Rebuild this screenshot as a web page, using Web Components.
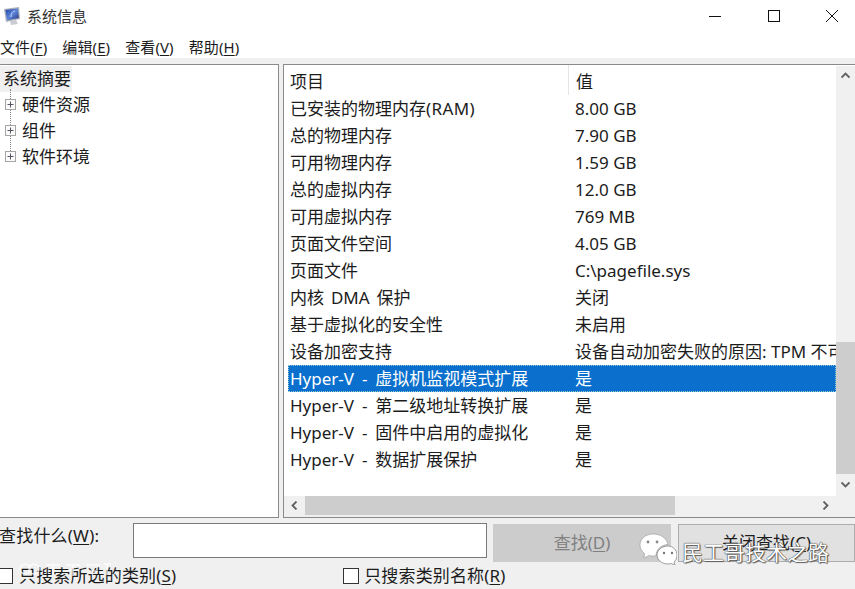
<!DOCTYPE html>
<html lang="zh">
<head>
<meta charset="utf-8">
<title>系统信息</title>
<style>
  html, body { margin: 0; height: 100%; overflow: hidden; }
  body { font: 17px/1 "Noto Sans", "Noto Sans CJK SC", sans-serif; color: #1c1c1c; background: #f0f0f0; }
</style>
</head>
<body>
<sys-window>
  <title-bar slot="top">系统信息</title-bar>
  <menu-bar slot="top"></menu-bar>
  <nav-tree slot="left"></nav-tree>
  <info-table slot="right"></info-table>
  <find-bar slot="bottom"></find-bar>
  <water-mark slot="over"></water-mark>
</sys-window>

<script>
class SysWindow extends HTMLElement {
  constructor() {
    super();
    this.attachShadow({ mode: 'open' });
    this.shadowRoot.innerHTML = `
      <style>
        :host { display: flex; flex-direction: column; width: 855px; height: 589px; position: relative; overflow: hidden; }
        .panes { display: flex; gap: 4px; height: 454px; margin-top: 6px; }
        ::slotted([slot=left]) { width: 279px; flex: none; }
        ::slotted([slot=right]) { flex: 1; min-width: 0; }
      </style>
      <slot name="top"></slot>
      <div class="panes"><slot name="left"></slot><slot name="right"></slot></div>
      <slot name="bottom"></slot>
      <slot name="over"></slot>
    `;
  }
}

class TitleBar extends HTMLElement {
  constructor() {
    super();
    this.attachShadow({ mode: 'open' });
    this.shadowRoot.innerHTML = `
      <style>
        :host { display: flex; align-items: center; height: 32px; background: #fff; padding-left: 3px; box-sizing: border-box; }
        .icon { width: 18px; height: 20px; margin-right: 6px; flex: none; }
        .text { font-size: 15px; color: #333; flex: 1; }
        .btns { display: flex; gap: 12.5px; }
        .btns svg { width: 12px; height: 12px; display: block; }
        .btn { width: 46px; display: flex; justify-content: center; }
      </style>
      <svg class="icon" viewBox="0 0 18 20">
        <defs><linearGradient id="s" x1="0" y1="0" x2="1" y2="1"><stop offset="0" stop-color="#1d3fa6"/><stop offset=".5" stop-color="#5f86d8"/><stop offset="1" stop-color="#24307a"/></linearGradient></defs>
        <path d="M1 3 L16 1 L17 13 L3 16Z" fill="#a9aebb"/>
        <path d="M2.5 4 L15 2.5 L15.8 12 L4 14.3Z" fill="url(#s)"/>
        <path d="M7 15 L13 14 L15 18 L8 19Z" fill="#c9ccd3"/>
        <path d="M8 11 C8 7 10 5 12 5" stroke="#cfe0ff" fill="none"/>
      </svg>
      <span class="text"><slot></slot></span>
      <div class="btns">
        <div class="btn"><svg viewBox="0 0 12 12"><path d="M0 6.5H12" stroke="#111" stroke-width="1"/></svg></div>
        <div class="btn"><svg viewBox="0 0 12 12"><rect x=".5" y=".5" width="11" height="11" fill="none" stroke="#111"/></svg></div>
        <div class="btn"><svg viewBox="0 0 12 12"><path d="M0 0L12 12M12 0L0 12" stroke="#111" stroke-width="1"/></svg></div>
      </div>
    `;
  }
}

class MenuBar extends HTMLElement {
  constructor() {
    super();
    this.attachShadow({ mode: 'open' });
    const items = [['文件', 'F'], ['编辑', 'E'], ['查看', 'V'], ['帮助', 'H']];
    this.shadowRoot.innerHTML = `
      <style>
        :host { display: flex; gap: 15px; height: 26px; align-items: center; background: #fff; font-size: 15px; box-sizing: border-box; padding-top: 4px; }
        span { letter-spacing: .1px; }
        u { text-underline-offset: 2px; }
      </style>
      ${items.map(([t, k]) => `<span>${t}(<u>${k}</u>)</span>`).join('')}
    `;
  }
}

class NavTree extends HTMLElement {
  constructor() {
    super();
    this.attachShadow({ mode: 'open' });
    const plus = `<svg class="plus" viewBox="0 0 11 11"><rect x=".5" y=".5" width="10" height="10" fill="#fbfbfb" stroke="#a5a5a5"/><path d="M2.5 5.5H8.5M5.5 2.5V8.5" stroke="#556"/></svg>`;
    this.shadowRoot.innerHTML = `
      <style>
        :host { display: block; background: #fff; border: 1px solid #8a8a8a; border-left: 0; box-sizing: border-box; padding-top: 1px; position: relative; }
        .root { display: inline-block; background: #f0f0f0; padding: 3px 1px 3px 3px; height: 20px; line-height: 20px; }
        .row { display: flex; align-items: center; height: 26px; }
        .plus { width: 11px; height: 11px; margin: 0 6px 0 5px; flex: none; position: relative; z-index: 1; }
        .tree { position: relative; margin-top: -1px; }
        .line { position: absolute; left: 10px; top: -2px; height: 72px; border-left: 1px dotted #888; }
        .row span { position: relative; }
      </style>
      <div class="root">系统摘要</div>
      <div class="tree">
        <div class="line"></div>
        <div class="row">${plus}<span>硬件资源</span></div>
        <div class="row">${plus}<span>组件</span></div>
        <div class="row">${plus}<span>软件环境</span></div>
      </div>
    `;
  }
}

class InfoTable extends HTMLElement {
  constructor() {
    super();
    this.attachShadow({ mode: 'open' });
    const rows = [
      ['已安装的物理内存<i>(RAM)</i>', '8.00 GB'],
      ['总的物理内存', '7.90 GB'],
      ['可用物理内存', '1.59 GB'],
      ['总的虚拟内存', '12.0 GB'],
      ['可用虚拟内存', '769 MB'],
      ['页面文件空间', '4.05 GB'],
      ['页面文件', 'C:\\pagefile.sys'],
      ['内核 DMA 保护', '关闭'],
      ['基于虚拟化的安全性', '未启用'],
      ['设备加密支持', '设备自动加密失败的原因: TPM 不可用'],
      ['Hyper-V - 虚拟机监视模式扩展', '是', 1],
      ['Hyper-V - 第二级地址转换扩展', '是'],
      ['Hyper-V - 固件中启用的虚拟化', '是'],
      ['Hyper-V - 数据扩展保护', '是'],
    ];
    this.shadowRoot.innerHTML = `
      <style>
        :host { display: grid; grid-template: 1fr 21px / 1fr 19px; background: #fff; border: 1px solid #8a8a8a; border-right: 0; box-sizing: border-box; min-height: 0; }
        .list { overflow: hidden; min-width: 0; }
        .head, .row { display: grid; grid-template-columns: 284px 1fr; }
        .head { height: 30px; }
        .head span { padding-left: 6px; height: 30px; line-height: 33px; }
        .head span + span { border-left: 1px solid #e5e5e5; padding-left: 7px; }
        .row { height: 27px; line-height: 27px; white-space: nowrap; }
        .row span { padding-left: 6px; overflow: hidden; word-spacing: 2.5px; }
        .row span.hv { word-spacing: 3.5px; }
        .row span + span { padding-left: 7px; word-spacing: 0; }
        i { font-style: normal; letter-spacing: .4px; }
        .sel { background: #0a6fcd; color: #fff; outline: 1px dotted #9cc; outline-offset: -1px; margin-left: 4px; grid-template-columns: 280px 1fr; }
        .sel span:first-child { padding-left: 2px; }
        .v, .h { background: #f0f0f0; display: flex; }
        .v { flex-direction: column; grid-row: 1; grid-column: 2; margin-top: 1px; }
        .h { grid-row: 2; grid-column: 1; }
        .corner { background: #f0f0f0; }
        .v .thumb { margin-top: 257px; height: 132px; background: #cdcdcd; }
        .v .arrow { height: 19px; flex: none; display: flex; align-items: center; justify-content: center; }
        .v .arrow.down { margin-top: auto; margin-bottom: 2px; }
        .h .arrow { width: 21px; flex: none; display: flex; align-items: center; justify-content: center; margin-bottom: 2px; }
        .h .thumb { width: 370px; background: #cdcdcd; margin-bottom: 2px; }
        .h .arrow.right { margin-left: auto; }
        svg { width: 9px; height: 9px; display: block; }
        path { fill: none; stroke: #606060; stroke-width: 1.8; }
      </style>
      <div class="list">
        <div class="head"><span>项目</span><span>值</span></div>
        ${rows.map(([a, b, s]) => `<div class="row${s ? ' sel' : ''}"><span${a.startsWith('Hyper') ? ' class="hv"' : ''}>${a}</span><span>${b}</span></div>`).join('')}
      </div>
      <div class="v">
        <div class="arrow"><svg viewBox="0 0 9 9"><path d="M.5 6.5L4.5 2.5L8.5 6.5"/></svg></div>
        <div class="thumb"></div>
        <div class="arrow down"><svg viewBox="0 0 9 9"><path d="M.5 2.5L4.5 6.5L8.5 2.5"/></svg></div>
      </div>
      <div class="h">
        <div class="arrow"><svg viewBox="0 0 9 9"><path d="M6.5 .5L2.5 4.5L6.5 8.5"/></svg></div>
        <div class="thumb"></div>
        <div class="arrow right"><svg viewBox="0 0 9 9"><path d="M2.5 .5L6.5 4.5L2.5 8.5"/></svg></div>
      </div>
      <div class="corner"></div>
    `;
  }
}

class FindBar extends HTMLElement {
  constructor() {
    super();
    this.attachShadow({ mode: 'open' });
    this.shadowRoot.innerHTML = `
      <style>
        :host { display: block; font-size: 17px; }
        .find { display: flex; align-items: flex-start; height: 45px; padding-top: 5px; box-sizing: border-box; }
        label { width: 133px; flex: none; height: 26px; line-height: 26px; margin-left: -1px; margin-right: 1px; letter-spacing: .2px; }
        .input { width: 354px; height: 35px; background: #fff; border: 1px solid #7a7a7a; box-sizing: border-box; flex: none; }
        .btn { height: 38px; margin-top: 1px; padding-bottom: 2px; width: 178px; box-sizing: border-box; display: flex; align-items: center; justify-content: center; margin-left: 6px; flex: none; }
        .off { background: #cccccc; color: #808080; }
        .on { background: #e1e1e1; border: 1px solid #adadad; width: 177px; margin-left: 7px; }
        .checks { display: flex; align-items: center; height: 26px; }
        .c { display: flex; align-items: center; gap: 6px; letter-spacing: .15px; }
        .c span { margin-top: -2px; }
        .c + .c { margin-left: 167px; gap: 5px; }
        .box { width: 16px; height: 16px; background: #fff; border: 1px solid #333; box-sizing: border-box; }
        u { text-underline-offset: 2px; }
      </style>
      <div class="find">
        <label>查找什么(<u>W</u>):</label>
        <div class="input"></div>
        <div class="btn off"><span>查找(<u>D</u>)</span></div>
        <div class="btn on"><span>关闭查找(<u>C</u>)</span></div>
      </div>
      <div class="checks">
        <div class="c" style="margin-left:-3px"><div class="box"></div><span>只搜索所选的类别(<u>S</u>)</span></div>
        <div class="c"><div class="box"></div><span>只搜索类别名称(<u>R</u>)</span></div>
      </div>
    `;
  }
}

class WaterMark extends HTMLElement {
  constructor() {
    super();
    this.attachShadow({ mode: 'open' });
    this.shadowRoot.innerHTML = `
      <style>
        :host { display: block; position: absolute; left: 0; top: 0; width: 855px; height: 589px; pointer-events: none; }
        .name { position: absolute; left: 682px; top: 540px; font-size: 21px; line-height: 24px; color: #fff; white-space: nowrap;
          text-shadow: 0 0 1px #333, 0 0 1px #333, 1px 1px 1px #666; }
        svg.we { position: absolute; left: 639px; top: 533px; width: 38px; height: 32px; }
        svg.faint { position: absolute; left: 16px; top: 561px; width: 96px; height: 18px; opacity: .75; }
      </style>
      <svg class="faint" viewBox="0 0 96 18" fill="none" stroke="#fff" stroke-width="1.6">
        <circle cx="9" cy="8" r="5"/><circle cx="18" cy="8" r="5"/>
        <path d="M30 4H44M37 2V14M50 4H64M52 9H62M57 4V15M70 4H84M72 10H82M88 3H95M91 3V14"/>
      </svg>
      <svg class="we" viewBox="0 0 38 32">
        <path d="M14 1C6.5 1 1 6 1 12c0 3.5 2 6.5 4.5 8.5L5 25l5-2.5c1.5.4 2.5.5 4 .5 1 0 2-.1 3-.3 0-6 5-11 12-11.2C27.5 5 21.500 1 14 1Z" fill="#fff" stroke="#888" stroke-width=".5"/>
        <path d="M29 13c-6 0-11 4-11 9s5 9 11 9c1.2 0 2.3-.2 3.3-.5L36 32.500l-1-3.500c2-1.700 3-4 3-7 0-5-4-9-9-9Z" fill="#fff" stroke="#777" stroke-width=".7"/>
        <circle cx="9" cy="9" r="1.4" fill="#888"/><circle cx="18" cy="9" r="1.4" fill="#888"/>
        <circle cx="25" cy="20" r="1.2" fill="#777"/><circle cx="33" cy="20" r="1.2" fill="#777"/>
      </svg>
      <span class="name">民工哥技术之路</span>
    `;
  }
}

customElements.define('sys-window', SysWindow);
customElements.define('title-bar', TitleBar);
customElements.define('menu-bar', MenuBar);
customElements.define('nav-tree', NavTree);
customElements.define('info-table', InfoTable);
customElements.define('find-bar', FindBar);
customElements.define('water-mark', WaterMark);
</script>
</body>
</html>
